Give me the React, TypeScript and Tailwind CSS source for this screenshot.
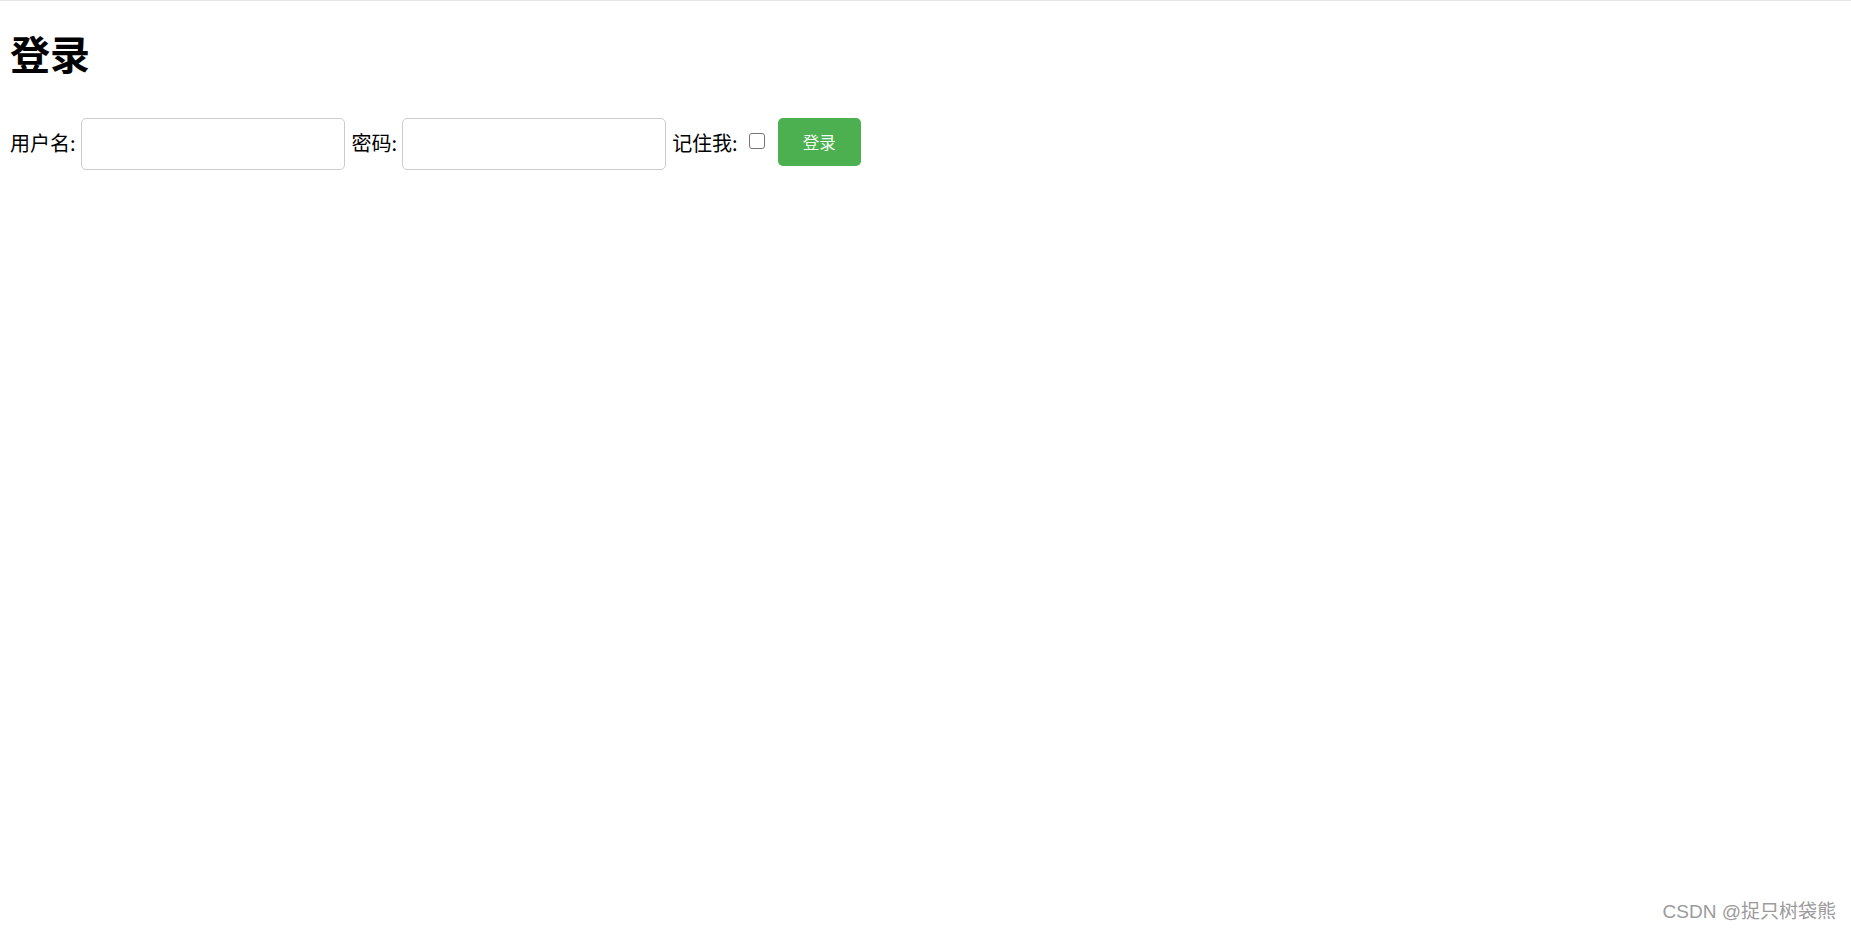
import { useState } from 'react'

const cjk = { fontFamily: '"Noto Sans CJK SC", "Noto Sans", sans-serif' }

const App = () => {
  const [username, setUsername] = useState('')
  const [password, setPassword] = useState('')
  const [remember, setRemember] = useState(false)

  return (
    <div className="relative min-h-[931px] w-full border-t border-[#e8e8e8] bg-white pl-[10px] text-black" style={cjk}>
      <h1 className="mt-[32px] text-[40px] font-bold leading-[40px]">登录</h1>

      <form className="mt-[45px] flex h-[52px] items-center text-[20px] leading-[24px]" onSubmit={(e) => e.preventDefault()}>
        <label className="mt-[-2px]">用户名:</label>
        <input
          type="text"
          value={username}
          onChange={(e) => setUsername(e.target.value)}
          className="ml-[5px] h-[52px] w-[264px] rounded-[5px] border border-[#cccccc] px-[12px] outline-none"
        />
        <label className="ml-[7px] mt-[-2px]">密码:</label>
        <input
          type="password"
          value={password}
          onChange={(e) => setPassword(e.target.value)}
          className="ml-[5px] h-[52px] w-[264px] rounded-[5px] border border-[#cccccc] px-[12px] outline-none"
        />
        <label className="ml-[6px] mt-[-2px]">记住我:</label>
        <input
          type="checkbox"
          checked={remember}
          onChange={(e) => setRemember(e.target.checked)}
          className="ml-[11px] mt-[-7px] h-[16px] w-[16px] appearance-none rounded-[3px] border border-[#767676] bg-white"
        />
        <button
          type="submit"
          className="ml-[13px] mt-[-4px] h-[48px] w-[83px] rounded-[5px] bg-[#4caf50] text-[16.5px] text-[#f2fbf0]"
        >
          登录
        </button>
      </form>

      <div
        className="absolute bottom-[7px] right-[15px] text-[19px] leading-[24px] text-[#9b9b9b]"
        style={{ fontFamily: '"Liberation Sans", "Noto Sans CJK SC", sans-serif' }}
      >
        CSDN @捉只树袋熊
      </div>
    </div>
  )
}

export default App
